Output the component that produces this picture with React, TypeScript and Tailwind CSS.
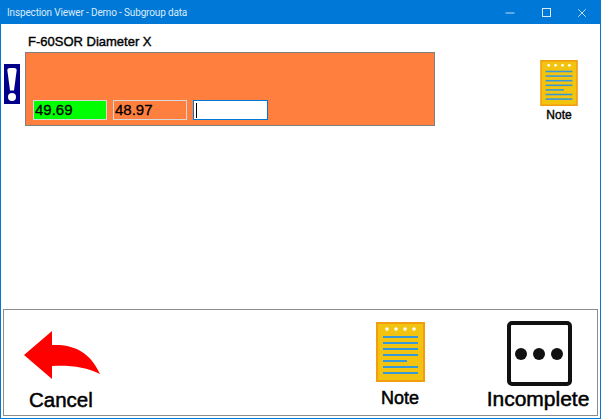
import { Minus, X } from 'lucide-react';

function NoteIcon({ className }: { className: string }) {
  return (
    <svg viewBox="0 0 49 60" className={className}>
      <rect x="1" y="1" width="47" height="58" fill="#f2c40f" stroke="#f39c12" strokeWidth="2" />
      {[11, 20, 29, 38].map((cx) => (
        <circle key={cx} cx={cx} cy="7" r="1.8" fill="#fff" />
      ))}
      {[15, 21, 27, 33, 39, 45, 51].map((y, i) => (
        <rect key={y} x="7" y={y - 1} width={i === 4 ? 24 : 35} height="2" fill="#3498db" />
      ))}
    </svg>
  );
}

function ValueBox({ value, color }: { value: string; color: string }) {
  return (
    <div className={`w-[74px] h-[20px] border border-[#d8d8d8] pl-[1px] text-[15px] leading-[18px] text-black [-webkit-text-stroke:0.3px_black] ${color}`}>
      {value}
    </div>
  );
}

export default function App() {
  return (
    <div className="w-[601px] h-[419px] flex flex-col border border-[#0078d7] bg-white overflow-hidden font-['Liberation_Sans',Arial,sans-serif]">
      {/* title bar */}
      <div className="h-[23px] shrink-0 flex items-center bg-[#0078d7]">
        <span className="pl-[6px] text-[10px] tracking-[-0.15px] font-['Roboto',sans-serif] text-[#d9ebf9] flex-1">Inspection Viewer - Demo - Subgroup data</span>
        <div className="flex items-center text-[#d9ebf9]">
          <div className="w-[36px] flex justify-center"><Minus className="w-[14px] h-[14px]" strokeWidth={1.5} /></div>
          <div className="w-[36px] flex justify-center"><div className="w-[9px] h-[9px] border border-[#d9ebf9]" /></div>
          <div className="w-[36px] flex justify-center"><X className="w-[14px] h-[14px]" strokeWidth={1.5} /></div>
        </div>
      </div>

      {/* subgroup area */}
      <div className="flex-1 flex pl-[3px] pt-[11px]">
        <div className="w-[16px] h-[40px] mt-[29px] bg-[#00008b] flex flex-col items-center justify-center gap-[2px] shrink-0">
          <div className="w-[10px] h-[23px] bg-white [clip-path:polygon(0_0,100%_0,70%_100%,30%_100%)] rounded-t-[3px]" />
          <div className="w-[8px] h-[8px] rounded-full bg-white" />
        </div>
        <div className="ml-[5px] w-[410px] shrink-0">
          <div className="h-[17px] pl-[3px] text-[13px] leading-[14px] text-black [-webkit-text-stroke:0.4px_black]">F-60SOR Diameter X</div>
          <div className="h-[74px] bg-[#ff7f3f] border border-[#7f7f7f] flex items-end gap-[6px] pl-[7px] pb-[5px]">
            <ValueBox value="49.69" color="bg-[#00ff00]" />
            <ValueBox value="48.97" color="bg-[#ff7f3f]" />
            <div className="w-[75px] h-[20px] border border-[#0078d7] bg-white pl-[2px] flex items-center">
              <div className="w-px h-[15px] bg-black" />
            </div>
          </div>
        </div>
        <div className="ml-[104px] mt-[25px] w-[40px] flex flex-col items-center">
          <NoteIcon className="w-[38px] h-[46px]" />
          <span className="mt-[2px] text-[12px] leading-[14px] text-black [-webkit-text-stroke:0.4px_black]">Note</span>
        </div>
      </div>

      {/* bottom buttons */}
      <div className="h-[107px] mx-[2px] mb-[2px] shrink-0 border border-[#8c8c8c] flex">
        <div className="w-[110px] pl-[20px] pt-[21px] flex flex-col">
          <svg viewBox="0 0 76 48" className="w-[76px] h-[48px]">
            <path d="M0 24 L28 0 V14 C48 13 66 20 76 43 C62 36 46 34 28 35 V48 Z" fill="#ff0000" />
          </svg>
          <span className="mt-[9px] pl-[5px] text-[20.5px] leading-[24px] text-black [-webkit-text-stroke:0.5px_black]">Cancel</span>
        </div>
        <div className="ml-[241px] w-[90px] pt-[12px] flex flex-col items-center">
          <NoteIcon className="w-[49px] h-[60px]" />
          <span className="mt-[6px] text-[18px] leading-[20px] text-black [-webkit-text-stroke:0.5px_black]">Note</span>
        </div>
        <div className="ml-[38px] w-[110px] pt-[11px] flex flex-col items-center">
          <div className="ml-[2px] w-[65px] h-[65px] border-[4px] border-[#111] rounded-[5px] flex items-center justify-center gap-[6px]">
            <div className="w-[12px] h-[12px] rounded-full bg-[#111]" />
            <div className="w-[12px] h-[12px] rounded-full bg-[#111]" />
            <div className="w-[12px] h-[12px] rounded-full bg-[#111]" />
          </div>
          <span className="mt-[2px] text-[21px] leading-[22px] text-black [-webkit-text-stroke:0.5px_black] whitespace-nowrap">Incomplete</span>
        </div>
      </div>
    </div>
  );
}
